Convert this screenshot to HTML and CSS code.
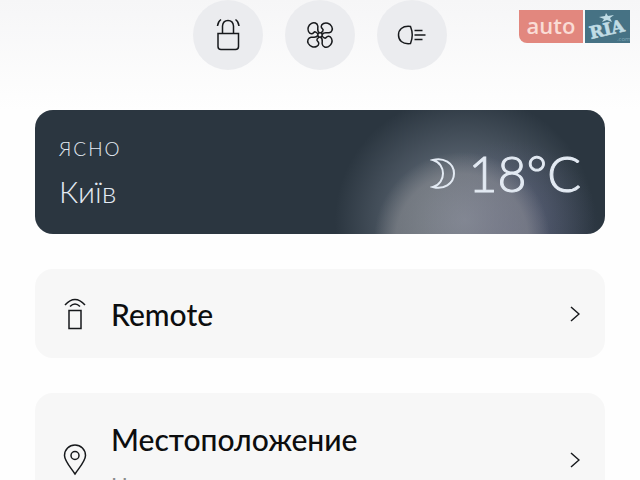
FILE: index.html
```html
<!DOCTYPE html>
<html lang="uk">

<head>
<meta charset="UTF-8">
<meta name="viewport" content="width=device-width, initial-scale=1.0">
<title>Remote</title>
<link rel="stylesheet" href="styles.css">
</head>

<body>

<div class="logo">
    <span class="logo-auto">auto</span>
    <svg class="logo-ria" viewBox="0 0 45 33" role="img" aria-label="RIA.com">
        <polygon class="logo-star" points="21,3 23,6 29,5 25,8 27,12 22,10 17,12 19,9 14,7 20,6"/>
        <text class="logo-name" x="6" y="29" transform="rotate(-13 6 29)">RIA</text>
        <text class="logo-com" x="32" y="31">.com</text>
    </svg>
</div>

<main class="container">
    <div class="controls">
        <button class="control" type="button" aria-label="Unlock">
            <svg class="icon" viewBox="0 0 36 36">
                <path d="M8 16.500H28.500V29.500Q28.500 32.500 25.500 32.500H11Q8 32.500 8 29.500ZM12.500 16.500V9Q13 3.500 18 3.500T23.500 9V16.500"/>
                <path d="M11 2.500Q8 4.500 7.500 9M25.500 2.500Q28.500 4.500 29 9"/>
            </svg>
        </button>
        <button class="control" type="button" aria-label="Climate">
            <svg class="icon" viewBox="0 0 36 36">
                <circle cx="18" cy="18" r="2.200"/>
                <path id="blade" d="M17.500 15.800C14.500 14 16.200 11.500 15.800 9C15.300 6 12 5 9.500 6.300C6 8.300 5.300 12 6.500 14.500C8 17.500 10.500 17.200 11.800 15.500C13 14 14.500 15.500 16 17"/>
                <use href="#blade" transform="rotate(90 18 18)"/>
                <use href="#blade" transform="rotate(180 18 18)"/>
                <use href="#blade" transform="rotate(270 18 18)"/>
            </svg>
        </button>
        <button class="control" type="button" aria-label="Lights">
            <svg class="icon" viewBox="0 0 36 36">
                <path d="M16.500 9.500C8 8.500 4.500 13 4.500 18S8 27.500 16.500 26.500Q20 18 16.500 9.500Z"/>
                <path d="M20.500 13.500H28.500M20.500 18H31.500M20.500 22.500H28.500"/>
            </svg>
        </button>
    </div>

    <section class="weather">
        <div class="place">
            <p class="condition">ЯСНО</p>
            <p class="city">Київ</p>
        </div>
        <div class="temperature">
            <svg class="moon" viewBox="0 0 26 34">
                <path d="M3 4C13 1 24 7 24 17.500S13 34 3 31C10 29 13 23 13 17.500S10 6 3 4Z"/>
            </svg>
            <span>18°C</span>
        </div>
    </section>

    <a class="card" href="#remote">
        <svg class="card-icon" viewBox="0 0 24 34">
            <path d="M6 13.500H18V31.500H6ZM2 8Q12 -3 22 8M7 9.500Q12 4.500 17 9.500"/>
        </svg>
        <span class="card-text">
            <span class="card-title">Remote</span>
        </span>
        <svg class="chevron" viewBox="0 0 10 18"><path d="M1 2L9 9L1 16"/></svg>
    </a>

    <a class="card card-tall" href="#location">
        <svg class="card-icon" viewBox="0 0 24 34">
            <path d="M12 31C8 25 1.500 18 1.500 12.500A10.500 10.500 0 0 1 22.500 12.500C22.500 18 16 25 12 31Z"/>
            <circle cx="12" cy="12.500" r="4"/>
        </svg>
        <span class="card-text">
            <span class="card-title">Местоположение</span>
            <span class="card-note">Н</span>
        </span>
        <svg class="chevron" viewBox="0 0 10 18"><path d="M1 2L9 9L1 16"/></svg>
    </a>
</main>

</body>

</html>
```
FILE: styles.css
```css
body {
    font-family: Lato, "Open Sans", sans-serif;
    background: linear-gradient(#f6f6f7, #fefefe 110px);
    background-repeat: no-repeat;
    margin: 0;
    height: 100vh;
    overflow: hidden;
}

.container {
    padding: 0 35px;
}

.controls {
    display: flex;
    justify-content: center;
    gap: 22px;
    margin-bottom: 40px;
}

.control {
    display: flex;
    align-items: center;
    justify-content: center;
    width: 70px;
    height: 70px;
    padding: 0;
    border: none;
    border-radius: 50%;
    background-color: #ebecef;
}

.icon {
    width: 36px;
    height: 36px;
}

.icon,
.card-icon,
.chevron {
    fill: none;
    stroke: #17191c;
    stroke-width: 1.5;
}

.weather {
    display: flex;
    align-items: center;
    justify-content: space-between;
    height: 124px;
    padding: 2px 24px 0;
    box-sizing: border-box;
    border-radius: 18px;
    color: #e3eaf3;
    background:
        radial-gradient(circle 88px at right 143px top 130px, rgba(145, 146, 150, 0.5) 75%, transparent),
        radial-gradient(circle 90px at right 95px top 120px, rgba(90, 90, 135, 0.4), transparent),
        radial-gradient(ellipse 130px 125px at right 140px top 110px, rgba(140, 150, 165, 0.8), transparent),
        #2b3640;
}

.condition,
.city {
    margin: 0;
}

.condition {
    font-size: 19px;
    font-weight: 300;
    line-height: 24px;
    letter-spacing: 2px;
    margin-bottom: 12px;
}

.city {
    font-size: 30px;
    line-height: 36px;
    font-weight: 300;
}

.temperature {
    display: flex;
    align-items: center;
    gap: 13px;
    font-size: 50px;
    line-height: 60px;
    font-weight: 300;
    -webkit-text-stroke: 1px #e3eaf3;
}

.moon {
    width: 26px;
    height: 34px;
    fill: none;
    stroke: #e3eaf3;
    stroke-width: 2;
}

.card {
    display: flex;
    align-items: center;
    gap: 24px;
    height: 89px;
    margin-top: 35px;
    padding: 0 25px 0 28px;
    box-sizing: border-box;
    border-radius: 18px;
    background-color: #f7f7f7;
    color: #0c0d0e;
    text-decoration: none;
}

.card-tall {
    height: 133px;
}

.card-icon {
    width: 24px;
    height: 34px;
}

.card-text {
    flex: 1;
    display: flex;
    flex-direction: column;
    gap: 14px;
}

.card-title {
    font-size: 30px;
    line-height: 36px;
    font-weight: 500;
}

.card-note {
    font-size: 22px;
    line-height: 28px;
    color: #8c8c8c;
}

.chevron {
    width: 10px;
    height: 18px;
}

/* badge over the page */
.logo {
    position: absolute;
    top: 10px;
    right: 10px;
    display: flex;
    gap: 2px;
}

.logo-auto {
    width: 64px;
    height: 33px;
    border-bottom-left-radius: 8px;
    background-color: #e2877e;
    color: #fadcd5;
    font-family: "Open Sans", sans-serif;
    font-size: 22px;
    font-weight: 600;
    line-height: 30px;
    text-align: center;
}

.logo-ria {
    width: 45px;
    height: 33px;
    background-color: #467284;
    fill: #c0dce5;
}

.logo-name {
    font-family: "DejaVu Serif", serif;
    font-size: 17px;
    font-weight: bold;
    stroke: #c0dce5;
    stroke-width: 0.6;
}

.logo-com {
    font-family: "Open Sans", sans-serif;
    font-size: 6px;
    fill: #83a9b7;
}
```
